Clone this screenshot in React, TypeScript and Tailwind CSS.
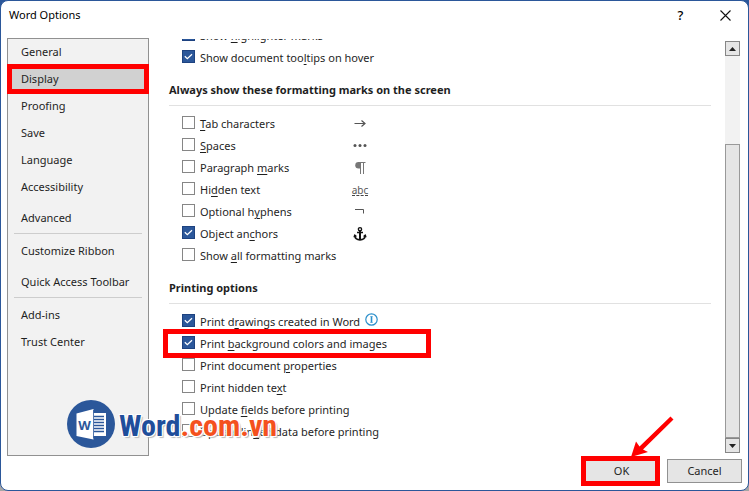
import { Fragment, useState } from 'react'
import type { ReactNode } from 'react'
import { clsx } from 'clsx'

interface Option {
  id: string
  label: ReactNode
  checked?: boolean
  mark?: ReactNode
  info?: boolean
  highlight?: boolean
}

interface NavItem {
  name: string
  spaced?: boolean
  divider?: boolean
}

const NAV: NavItem[] = [
  { name: 'General' },
  { name: 'Display' },
  { name: 'Proofing' },
  { name: 'Save' },
  { name: 'Language' },
  { name: 'Accessibility' },
  { name: 'Advanced', spaced: true, divider: true },
  { name: 'Customize Ribbon' },
  { name: 'Quick Access Toolbar', spaced: true, divider: true },
  { name: 'Add-ins' },
  { name: 'Trust Center' },
]

const PAGE_OPTIONS: Option[] = [
  { id: 'highlighter', label: <>Show <u>h</u>ighlighter marks</>, checked: true },
  { id: 'tooltips', label: <>Show document too<u>l</u>tips on hover</>, checked: true },
]

const MARK_OPTIONS: Option[] = [
  { id: 'tab', label: <><u>T</u>ab characters</>, mark: <ArrowMark /> },
  { id: 'spaces', label: <><u>S</u>paces</>, mark: <DotsMark /> },
  { id: 'paragraph', label: <>Paragraph <u>m</u>arks</>, mark: <PilcrowMark /> },
  {
    id: 'hidden',
    label: <>Hi<u>d</u>den text</>,
    mark: <span className="border-b border-dashed border-[#444] text-[10px] leading-[10px] text-[#555]">abc</span>,
  },
  { id: 'hyphens', label: <>Optional h<u>y</u>phens</>, mark: <HyphenMark /> },
  { id: 'anchors', label: <>Object an<u>c</u>hors</>, checked: true, mark: <AnchorMark /> },
  { id: 'all', label: <>Show <u>a</u>ll formatting marks</> },
]

const PRINT_OPTIONS: Option[] = [
  { id: 'drawings', label: <>Print d<u>r</u>awings created in Word</>, checked: true, info: true },
  { id: 'background', label: <>Print <u>b</u>ackground colors and images</>, checked: true, highlight: true },
  { id: 'properties', label: <>Print document <u>p</u>roperties</> },
  { id: 'hiddentext', label: <>Print hidden te<u>x</u>t</> },
  { id: 'fields', label: <>Update <u>f</u>ields before printing</> },
  { id: 'linked', label: <>Update lin<u>k</u>ed data before printing</> },
]

function ArrowMark() {
  return (
    <svg className="h-4 w-4" viewBox="0 0 16 16" fill="none" stroke="#555" strokeWidth="1.2">
      <path d="M2.5 7.5H13M9.5 4.5l3.5 3-3.5 3" />
    </svg>
  )
}

function DotsMark() {
  return (
    <svg className="h-4 w-4" viewBox="0 0 16 16" fill="#555">
      <circle cx="3" cy="7.5" r="1.5" />
      <circle cx="8" cy="7.5" r="1.5" />
      <circle cx="13" cy="7.5" r="1.5" />
    </svg>
  )
}

function PilcrowMark() {
  return (
    <svg className="h-4 w-4" viewBox="0 0 16 16">
      <path d="M9 2H6.500a3.200 3.200 0 0 0 0 6.500H9z" fill="#777" />
      <path d="M8.500 2v12M11.500 2v12M6 2.500h7.500" stroke="#777" fill="none" />
    </svg>
  )
}

function HyphenMark() {
  return (
    <svg className="h-4 w-4" viewBox="0 0 16 16" fill="none" stroke="#555">
      <path d="M3 5.500h8.500v4" />
    </svg>
  )
}

function AnchorMark() {
  return (
    <svg className="h-4 w-4" viewBox="0 0 16 16" fill="none" stroke="#111">
      <circle cx="8" cy="3.200" r="1.600" strokeWidth="1.400" />
      <path d="M8 5v9" strokeWidth="2" />
      <path d="M5 6.500h6" strokeWidth="1.400" />
      <path d="M2.700 9.500c.3 2.600 2.400 4.300 5.300 4.300s5-1.700 5.300-4.300" strokeWidth="1.800" />
      <path d="M1.300 11.300l1.200-3.300 2.700 2.300zM14.700 11.300l-1.200-3.300-2.700 2.300z" fill="#111" stroke="none" />
    </svg>
  )
}

function InfoIcon() {
  return (
    <svg className="ml-1 h-[13px] w-[13px]" viewBox="0 0 13 13" fill="none" stroke="#2b8fcb">
      <circle cx="6.500" cy="6.500" r="5.700" strokeWidth="1.200" />
      <path d="M6.500 3.500v6" strokeWidth="1.600" />
      <path d="M5.300 3.500h2.400M5.300 9.500h2.400" strokeWidth=".6" />
    </svg>
  )
}

function OptionRow({ option }: { option: Option }) {
  return (
    <div className="relative flex h-[22px] items-start pl-[13px]">
      <div className="flex min-w-[162px] items-start">
        <span className="relative mt-1 mr-[5px] h-[13px] w-[13px]">
          <input
            id={option.id}
            type="checkbox"
            defaultChecked={option.checked}
            className="peer block h-[13px] w-[13px] appearance-none border border-[#868686] bg-white checked:border-[#1d4280] checked:bg-[#2b579a]"
          />
          <svg
            className="pointer-events-none absolute inset-0 hidden h-[13px] w-[13px] peer-checked:block"
            viewBox="0 0 13 13"
            fill="none"
            stroke="#fff"
            strokeWidth="1.300"
          >
            <path d="M2.800 6.300l2.500 2.400 4.700-4.400" />
          </svg>
        </span>
        <label htmlFor={option.id} className="leading-6 whitespace-nowrap underline-offset-2">
          {option.label}
        </label>
        {option.info && <span className="mt-[3px] ml-px"><InfoIcon /></span>}
      </div>
      {option.mark && <span className="flex h-6 w-8 items-center justify-center">{option.mark}</span>}
      {option.highlight && (
        <div className="pointer-events-none absolute -top-[3px] -bottom-1 -left-[6px] w-[268px] border-5 border-[#ff0000]" />
      )}
    </div>
  )
}

function Section({ title, options }: { title: string; options: Option[] }) {
  return (
    <section>
      <h2 className="mb-[6px] h-[38px] border-b border-[#e1e1e1] pt-3 leading-5 font-bold">{title}</h2>
      {options.map(o => <OptionRow key={o.id} option={o} />)}
    </section>
  )
}

function Scrollbar() {
  return (
    <div className="my-[3px] flex w-[15px] flex-col bg-[#f2f2f2]">
      <button aria-label="Scroll up" className="grid h-[15px] place-items-center border border-[#868686] bg-[#e5e5e5]">
        <svg className="h-1 w-[7px]" viewBox="0 0 7 4"><path d="M0 4l3.500-4L7 4z" fill="#222" /></svg>
      </button>
      <div className="h-[88px]" />
      <div className="flex-1 border border-[#999] bg-[#e5e5e5]" />
      <button aria-label="Scroll down" className="grid h-[15px] place-items-center border border-[#868686] bg-[#e5e5e5]">
        <svg className="h-1 w-[7px]" viewBox="0 0 7 4"><path d="M0 0l3.500 4L7 0z" fill="#222" /></svg>
      </button>
    </div>
  )
}

function Watermark() {
  return (
    <div className="pointer-events-none absolute bottom-2 left-[66px] flex items-center gap-1">
      <svg className="h-12 w-12" viewBox="0 0 48 48">
        <circle cx="24" cy="24" r="24" fill="#2b579a" />
        <path d="M26 13h13v23H26z" fill="#fff" />
        <path d="M27 16.500h10M27 19.500h10M27 22.500h10M27 25.500h10M27 28.500h10M27 31.500h10" stroke="#2b579a" strokeWidth="1.300" />
        <path d="M9.500 13.500L26.500 9v30.500L9.500 36z" fill="#fff" />
        <path d="M26.500 10v28.500" stroke="#2b579a" strokeWidth=".8" />
        <text x="17.500" y="29.500" textAnchor="middle" fontFamily="Open Sans, sans-serif" fontWeight="700" fontSize="13" fill="#2b579a">W</text>
      </svg>
      <span className="pt-1 font-['Liberation_Sans_Narrow','Roboto_Condensed',sans-serif] text-[30px] leading-none font-bold text-[#1f4e9b] [text-shadow:1px_1px_0_#fff,-1px_-1px_0_#fff,1px_-1px_0_#fff,-1px_1px_0_#fff,2px_2px_1px_#bbb]">
        Word<span className="text-[#f4511e]">.com.vn</span>
      </span>
    </div>
  )
}

export default function App() {
  const [active, setActive] = useState('Display')

  return (
    <div className="bg-linear-to-b from-[#2b579a] from-50% to-[#a6a6a6] to-50% font-['Noto_Sans',sans-serif] text-[11px] text-[#1f1f1f]">
      <div className="overflow-hidden rounded-lg border border-[#2b579a] bg-white">
        <header className="flex h-[37px] items-center pb-2 pl-2">
          <h1 className="flex-1 text-black">Word Options</h1>
          <button aria-label="Help" className="w-[45px] text-[13px] font-medium text-black">?</button>
          <button aria-label="Close" className="grid w-[45px] place-items-center">
            <svg className="h-[11px] w-[11px]" viewBox="0 0 11 11" stroke="#111" strokeWidth="1.100">
              <path d="M.5.5l10 10M10.500.5l-10 10" />
            </svg>
          </button>
        </header>

        <div className="relative flex pr-2 pl-[6px]">
          <nav className="w-[142px] shrink-0 border border-[#919191] bg-[#f2f2f2]">
            {NAV.map(item => (
              <Fragment key={item.name}>
                <button
                  onClick={() => setActive(item.name)}
                  className={clsx(
                    'relative block h-[27px] w-full pl-[13px] text-left whitespace-nowrap',
                    item.spaced && 'mt-1',
                    active === item.name && 'bg-[#d1d1d1]'
                  )}
                >
                  {item.name}
                  {active === item.name && (
                    <span className="absolute -inset-x-px -top-[2px] -bottom-px border-5 border-[#ff0000]" />
                  )}
                </button>
                {item.divider && <div className="mx-[6px] mt-px mb-1 h-px bg-[#cdcdcd]" />}
              </Fragment>
            ))}
          </nav>

          <main className="mt-px flex-1 overflow-hidden pr-[14px] pb-[14px] pl-5">
            {/* first row is scrolled partly out of view */}
            <div className="-mt-[15px]">
              {PAGE_OPTIONS.map(o => <OptionRow key={o.id} option={o} />)}
            </div>
            <Section title="Always show these formatting marks on the screen" options={MARK_OPTIONS} />
            <Section title="Printing options" options={PRINT_OPTIONS} />
          </main>

          <Scrollbar />
          <Watermark />
        </div>

        <footer className="flex justify-end gap-2 pt-[3px] pr-[6px] pb-[7px]">
          <div className="relative">
            <button className="h-6 w-[75px] border border-[#919191] bg-[#e5e5e5]">OK</button>
            <div className="pointer-events-none absolute -inset-y-[3px] -right-px -left-[3px] border-5 border-[#ff0000]" />
            <svg className="pointer-events-none absolute -top-11 left-[46px] h-11 w-11" viewBox="0 0 44 44" fill="#ff0000">
              <path d="M1 42l5-15.500 3.500 5L40.500 1.500l3 3L13 34.500l5 2.500z" />
            </svg>
          </div>
          <button className="h-6 w-[75px] border border-[#919191] bg-[#e5e5e5]">Cancel</button>
        </footer>
      </div>
    </div>
  )
}
